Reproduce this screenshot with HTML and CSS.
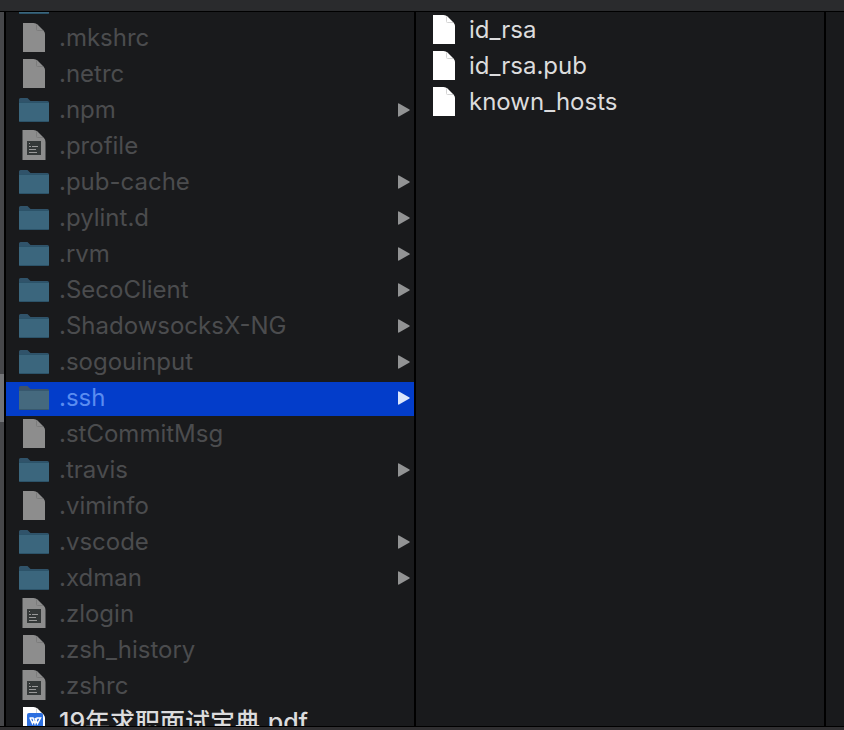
FILE: index.html
```
<!DOCTYPE html>
<html lang="en">
<head>
    <meta charset="UTF-8">
    <meta name="viewport" content="width=device-width, initial-scale=1.0">
    <title>Finder</title>
    <link rel="stylesheet" href="styles.css">
</head>
<body>
    <!-- Shared icons -->
    <svg class="sprite" aria-hidden="true">
        <symbol id="folder" viewBox="0 0 30 36">
            <path class="folder-back" d="M0 6.500Q0 5 1.500 5H8.500L11.500 8H28.500Q30 8 30 9.500V12H0Z"/>
            <path class="folder-front" d="M0 10H30V27.500Q30 29 28.500 29H1.500Q0 29 0 27.500Z"/>
            <path class="folder-edge" d="M0 9.500H30M0.500 28.500H29.500"/>
        </symbol>
        <symbol id="file" viewBox="0 0 30 36">
            <path class="page" d="M4 2H14.500Q17 2 18.500 3.500L24.500 9.500Q26 11 26 13V31H4Z"/>
            <path class="fold" d="M17.500 3.500V8.500Q17.500 9.500 18.500 9.500H24"/>
        </symbol>
        <symbol id="text-file" viewBox="0 0 30 36">
            <path class="page" d="M3.500 1H14.500Q17 1 18.500 2.500L25 9Q26.500 10.500 26.500 13V31H3.500Z"/>
            <path class="fold" d="M17.500 2.500V7.500Q17.500 8.500 18.500 8.500H24"/>
            <path class="screen" d="M8 12H22V26H8Z"/>
            <path class="lines" d="M10 14.500H11M10 17.500H12M13 17.500H19M10 20.500H17M10 23.500H18"/>
        </symbol>
        <symbol id="pdf-file" viewBox="0 0 30 36">
            <path class="page" d="M4 2H14.500Q17 2 18.500 3.500L24.500 9.500Q26 11 26 13V31H4Z"/>
            <path class="fold" d="M17.500 3.500V8.500Q17.500 9.500 18.500 9.500H24"/>
            <rect class="badge" x="8" y="8" width="16" height="16" rx="2"/>
            <path class="badge-mark" d="M10.500 13H14L16 18.500L18 13H21.500L18.500 18.500L16 13M11 13L13.500 18.500L15 15"/>
        </symbol>
        <symbol id="arrow" viewBox="0 0 12 14">
            <path d="M0 1Q0 0 1 0.500L11.500 6.500Q12 7 11.500 7.500L1 13.500Q0 14 0 13Z"/>
        </symbol>
    </svg>

    <header class="toolbar"></header>

    <main class="browser">
        <div class="scroll-strip">
            <div class="thumb"></div>
        </div>

        <!-- Home folder -->
        <ul class="column home">
            <li><button class="item hidden"><svg class="icon"><use href="#folder"/></svg></button></li>
            <li><button class="item hidden"><svg class="icon"><use href="#file"/></svg><span class="name">.mkshrc</span></button></li>
            <li><button class="item hidden"><svg class="icon"><use href="#file"/></svg><span class="name">.netrc</span></button></li>
            <li><button class="item hidden"><svg class="icon"><use href="#folder"/></svg><span class="name">.npm</span><svg class="arrow"><use href="#arrow"/></svg></button></li>
            <li><button class="item hidden"><svg class="icon"><use href="#text-file"/></svg><span class="name">.profile</span></button></li>
            <li><button class="item hidden"><svg class="icon"><use href="#folder"/></svg><span class="name">.pub-cache</span><svg class="arrow"><use href="#arrow"/></svg></button></li>
            <li><button class="item hidden"><svg class="icon"><use href="#folder"/></svg><span class="name">.pylint.d</span><svg class="arrow"><use href="#arrow"/></svg></button></li>
            <li><button class="item hidden"><svg class="icon"><use href="#folder"/></svg><span class="name">.rvm</span><svg class="arrow"><use href="#arrow"/></svg></button></li>
            <li><button class="item hidden"><svg class="icon"><use href="#folder"/></svg><span class="name">.SecoClient</span><svg class="arrow"><use href="#arrow"/></svg></button></li>
            <li><button class="item hidden"><svg class="icon"><use href="#folder"/></svg><span class="name">.ShadowsocksX-NG</span><svg class="arrow"><use href="#arrow"/></svg></button></li>
            <li><button class="item hidden"><svg class="icon"><use href="#folder"/></svg><span class="name">.sogouinput</span><svg class="arrow"><use href="#arrow"/></svg></button></li>
            <li><button class="item hidden selected"><svg class="icon"><use href="#folder"/></svg><span class="name">.ssh</span><svg class="arrow"><use href="#arrow"/></svg></button></li>
            <li><button class="item hidden"><svg class="icon"><use href="#file"/></svg><span class="name">.stCommitMsg</span></button></li>
            <li><button class="item hidden"><svg class="icon"><use href="#folder"/></svg><span class="name">.travis</span><svg class="arrow"><use href="#arrow"/></svg></button></li>
            <li><button class="item hidden"><svg class="icon"><use href="#file"/></svg><span class="name">.viminfo</span></button></li>
            <li><button class="item hidden"><svg class="icon"><use href="#folder"/></svg><span class="name">.vscode</span><svg class="arrow"><use href="#arrow"/></svg></button></li>
            <li><button class="item hidden"><svg class="icon"><use href="#folder"/></svg><span class="name">.xdman</span><svg class="arrow"><use href="#arrow"/></svg></button></li>
            <li><button class="item hidden"><svg class="icon"><use href="#text-file"/></svg><span class="name">.zlogin</span></button></li>
            <li><button class="item hidden"><svg class="icon"><use href="#file"/></svg><span class="name">.zsh_history</span></button></li>
            <li><button class="item hidden"><svg class="icon"><use href="#text-file"/></svg><span class="name">.zshrc</span></button></li>
            <li><button class="item"><svg class="icon"><use href="#pdf-file"/></svg><span class="name chinese" lang="zh">19年求职面试宝典.pdf</span></button></li>
        </ul>

        <!-- Contents of .ssh -->
        <ul class="column">
            <li><button class="item"><svg class="icon"><use href="#file"/></svg><span class="name">id_rsa</span></button></li>
            <li><button class="item"><svg class="icon"><use href="#file"/></svg><span class="name">id_rsa.pub</span></button></li>
            <li><button class="item"><svg class="icon"><use href="#file"/></svg><span class="name">known_hosts</span></button></li>
        </ul>

        <div class="next-column"></div>
    </main>

    <footer class="status-bar"></footer>
</body>
</html>
```
FILE: styles.css
```
* {
    box-sizing: border-box;
}

/* Window fills the page: toolbar, columns, status bar */
body {
    margin: 0;
    height: 100vh;
    display: flex;
    flex-direction: column;
    background-color: #191a1c;
    color: #dcdcdd;
    font-family: Inter, "Noto Sans CJK SC", sans-serif;
    font-size: 24px;
    line-height: 32px;
    overflow: hidden;
}

.sprite {
    display: none;
}

.toolbar {
    flex: none;
    height: 12px;
    background-color: #2a2b2d;
    border-bottom: 1px solid #000;
}

.status-bar {
    flex: none;
    height: 4px;
    background-color: #302f31;
    border-top: 1px solid #000;
}

/* Column view */
.browser {
    flex: 1;
    min-height: 0;
    display: grid;
    grid-template-columns: 6px 1fr 1fr 18px;
    grid-template-rows: 100%;
}

.scroll-strip {
    padding-top: 362px;
    background-color: #46474a;
    border-right: 2px solid #000;
}

.thumb {
    height: 48px;
    background-color: #737477;
}

.column {
    margin: 0;
    padding: 1px 0 0;
    list-style: none;
    border-right: 2px solid #000;
    overflow: hidden;
}

/* The home list is scrolled part of the way down */
.home li:first-child {
    margin-top: -28px;
}

/* One file or folder */
.item {
    display: flex;
    align-items: center;
    gap: 10px;
    width: 100%;
    height: 36px;
    padding: 0 4px 0 13px;
    border: 1px solid transparent;
    border-width: 1px 0;
    background-color: transparent;
    background-clip: padding-box;
    color: inherit;
    font: inherit;
    text-align: left;
    cursor: pointer;
}

.name {
    flex: 1;
    padding-bottom: 2px;
    white-space: nowrap;
}

.chinese {
    font-size: 25px;
    font-weight: 500;
}

.icon {
    flex: none;
    width: 30px;
    height: 36px;
}

.arrow {
    flex: none;
    width: 12px;
    height: 14px;
    margin-bottom: 2px;
    fill: #929394;
}

.hidden .name {
    color: #4b4c4e;
}

.hidden .icon {
    --page: #8d8d8d;
    --fold: #7c7c7c;
}

.selected {
    background-color: #033dca;
}

.selected .name {
    color: #5a8cf0;
}

.selected .arrow {
    fill: #dce6fb;
}

.selected .icon {
    --folder-back: #3f5368;
    --folder-front: #45697e;
    --folder-edge: #37586e;
}

/* Icon colors */
.page {
    fill: var(--page, #fff);
}

.fold {
    fill: none;
    stroke: var(--fold, #d4d4d4);
}

.folder-back {
    fill: var(--folder-back, #30536a);
}

.folder-front {
    fill: var(--folder-front, #3b667d);
}

.folder-edge {
    fill: none;
    stroke: var(--folder-edge, #2c5369);
}

.screen {
    fill: #343838;
}

.lines {
    fill: none;
    stroke: #999;
}

.badge {
    fill: #2c6fe0;
}

.badge-mark {
    fill: none;
    stroke: #fff;
    stroke-width: 1.5;
}
```
